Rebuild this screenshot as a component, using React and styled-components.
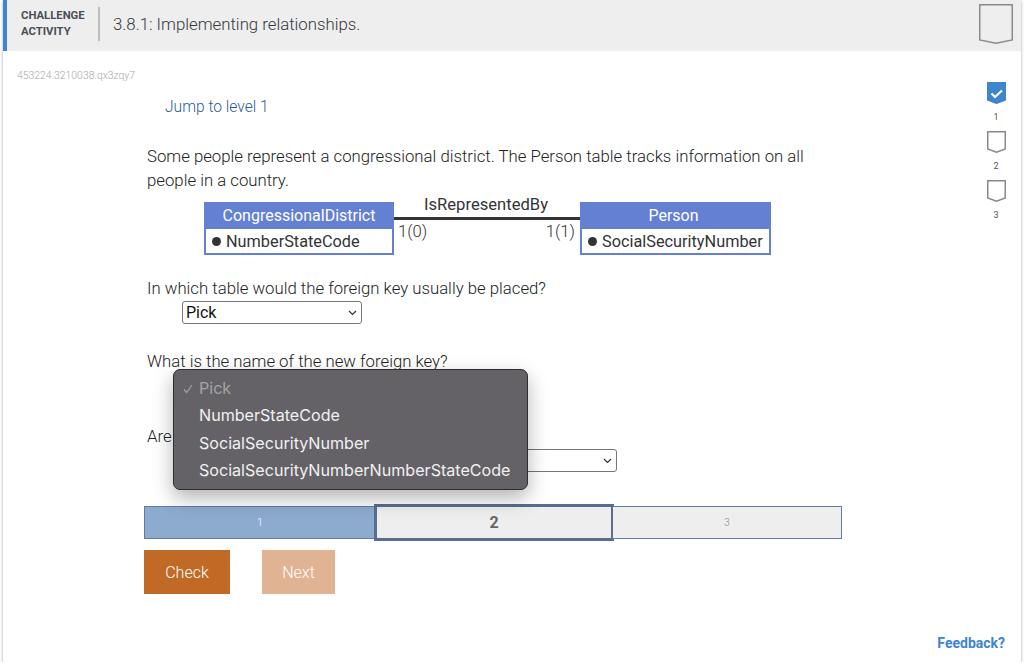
import React from 'react';
import styled, {createGlobalStyle} from 'styled-components';

const GlobalStyle = createGlobalStyle`
  html, body {
    margin: 0;
    background: #fff;
    font-family: Roboto, "Liberation Sans", sans-serif;
  }
  * { box-sizing: border-box; }
`;

const CHEVRON = "data:image/svg+xml,%3Csvg xmlns='http://www.w3.org/2000/svg' width='9' height='6'%3E%3Cpath d='M1 1l3.5 3.5L8 1' fill='none' stroke='%23333' stroke-width='1.2'/%3E%3C/svg%3E";

const Card = styled.div`
  display: flex;
  flex-direction: column;
  width: 1018px;
  height: 662px;
  margin-left: 3px;
  background: #fff;
  box-shadow: 0 1px 3px rgba(0, 0, 0, 0.35);
`;

const Header = styled.header`
  display: flex;
  align-items: center;
  height: 51px;
  flex-shrink: 0;
  padding: 0 8px 3px 14px;
  background: #eeeeee;
  border-left: 4px solid #3d85cc;
`;

const Caption = styled.div`
  width: 77px;
  font-size: 11.3px;
  font-weight: 700;
  line-height: 16px;
  color: #4a4f55;
`;

const Divider = styled.div`
  width: 2px;
  height: 34px;
  margin-right: 13px;
  background: #bdbdbd;
`;

const Title = styled.h1`
  flex: 1;
  margin: 0;
  font-size: 16.8px;
  font-weight: 300;
  color: #33383d;
`;

const Body = styled.div`
  display: flex;
  flex: 1;
  min-height: 0;
`;

const Content = styled.main`
  flex: 1;
  padding: 19px 0 0 14px;
`;

const ActivityId = styled.div`
  font-size: 10.4px;
  font-weight: 300;
  line-height: 12px;
  color: #a8a8a8;
`;

const Exercise = styled.div`
  position: relative;
  width: 698px;
  margin: 13px 0 0 127px;
`;

const JumpLink = styled.a`
  display: block;
  margin-left: 21px;
  font-size: 15.6px;
  font-weight: 300;
  line-height: 24px;
  color: #2e5c9a;
`;

const Prompt = styled.p`
  width: 680px;
  margin: ${(props) => props.$top || 0}px 0 0 3px;
  font-size: 16.75px;
  font-weight: 300;
  line-height: 24px;
  color: #222;
`;

const Diagram = styled.div`
  display: flex;
  align-items: flex-start;
  margin: 4px 0 0 60px;
  font-size: 16.3px;
  color: #333;
`;

const EntityTable = styled.div`
  width: ${(props) => props.$width}px;
  margin-top: 6px;
  border: 2px solid #6480d2;
`;

const EntityName = styled.div`
  height: 25px;
  padding-right: ${(props) => props.$inset || 0}px;
  font-size: 16px;
  line-height: 24px;
  text-align: center;
  color: #fff;
  background: #6480d2;
`;

const EntityKey = styled.div`
  display: flex;
  align-items: center;
  gap: 5px;
  height: 24px;
  padding-left: 6px;
  white-space: nowrap;
`;

const KeyDot = styled.span`
  width: 9px;
  height: 9px;
  border-radius: 50%;
  background: #333;
`;

const Relation = styled.div`
  width: 186px;
`;

const RelationName = styled.div`
  height: 18px;
  padding-right: 2px;
  font-size: 16.6px;
  line-height: 18px;
  text-align: center;
`;

const RelationLine = styled.div`
  height: 3px;
  margin-top: 3px;
  background: #333;
`;

const Cardinality = styled.div`
  display: flex;
  justify-content: space-between;
  padding: 3px 5px 0 4px;
  font-size: 16.7px;
  font-weight: 300;
  line-height: 18px;
`;

const Select = styled.select`
  display: block;
  width: ${(props) => props.$width}px;
  height: 23px;
  margin: ${(props) => props.$top}px 0 0 38px;
  padding: 0 0 0 3px;
  appearance: none;
  font-family: Roboto, "Liberation Sans", sans-serif;
  font-size: 16px;
  color: #111;
  background: #fff url("${CHEVRON}") no-repeat right 4px center;
  border: 1px solid #767676;
  border-radius: 3px;
`;

const PickerMenu = styled.ul`
  position: absolute;
  top: 274px;
  left: 29px;
  width: 355px;
  height: 121px;
  margin: 0;
  padding: 5px 0 0;
  list-style: none;
  font-family: Inter, "Liberation Sans", sans-serif;
  font-size: 16.1px;
  color: #f1f0f2;
  background: #646266;
  border: 1px solid #2e2e30;
  border-radius: 7px;
  box-shadow: 0 8px 20px rgba(0, 0, 0, 0.3);
`;

const PickerItem = styled.li`
  position: relative;
  height: 27.4px;
  padding-left: 25px;
  line-height: 27px;
  white-space: nowrap;
  color: ${(props) => (props.$muted ? '#a5a3a7' : '#f1f0f2')};
`;

const PickerCheck = styled.svg`
  position: absolute;
  top: 9px;
  left: 9px;
  width: 10px;
  height: 10px;
`;

const Levels = styled.div`
  display: flex;
  height: 33px;
  margin-top: 34px;
  border: 1px solid #5f7ba6;
`;

const Level = styled.div`
  display: flex;
  flex: ${(props) => props.$grow};
  align-items: center;
  justify-content: center;
  font-size: 10px;
  font-weight: 300;
  color: ${(props) => (props.$done ? '#fff' : '#8a8a8a')};
  background: ${(props) => (props.$done ? '#8dabcf' : '#eeeeee')};
`;

const ActiveLevel = styled(Level)`
  margin: -3px -1px;
  font-size: 16px;
  font-weight: 700;
  color: #666;
  border: 3px solid #5a6d90;
`;

const Actions = styled.div`
  display: flex;
  gap: 32px;
  margin-top: 11px;
`;

const ActionButton = styled.button`
  width: ${(props) => props.$width}px;
  height: 44px;
  padding: 0;
  font-family: Roboto, "Liberation Sans", sans-serif;
  font-size: 16px;
  font-weight: 300;
  color: #fff;
  background: ${(props) => props.$color};
  border: 0;
`;

const Sidebar = styled.aside`
  display: flex;
  flex-direction: column;
  align-items: center;
  gap: 8px;
  width: 50px;
  padding-top: 31px;
`;

const LevelMark = styled.div`
  display: flex;
  flex-direction: column;
  align-items: center;
  gap: 7px;
  font-size: 9px;
  line-height: 12px;
  color: #555;
`;

const Footer = styled.footer`
  display: flex;
  justify-content: flex-end;
  padding: 0 16px 11px 0;
`;

const FeedbackLink = styled.a`
  font-size: 14px;
  font-weight: 700;
  line-height: 16px;
  color: #3d85cc;
`;

function Bookmark({size, height, filled}) {
    return (
        <svg width={size} height={height} viewBox={`0 0 ${size} ${height}`}>
            <path
                d={`M.75.75H${size - 0.75}V${height - 4}L${size / 2} ${height - 0.75}L.75 ${height - 4}Z`}
                fill={filled ? '#3d85cc' : 'none'}
                stroke={filled ? '#3d85cc' : '#8a8a8a'}
                strokeWidth="1.5"
            />
            {filled && (
                <path d="M4.5 11.5L8 15L15 8.5" fill="none" stroke="#fff" strokeWidth="2.2" />
            )}
        </svg>
    );
}

const MENU_OPTIONS = ['NumberStateCode', 'SocialSecurityNumber', 'SocialSecurityNumberNumberStateCode'];

export default function App() {
    return (
        <Card>
            <GlobalStyle />
            <Header>
                <Caption>CHALLENGE ACTIVITY</Caption>
                <Divider />
                <Title>3.8.1: Implementing relationships.</Title>
                <Bookmark size={34} height={40} />
            </Header>
            <Body>
                <Content>
                    <ActivityId>453224.3210038.qx3zqy7</ActivityId>
                    <Exercise>
                        <JumpLink>Jump to level 1</JumpLink>
                        <Prompt $top={25}>
                            Some people represent a congressional district. The Person table tracks information on all people in a country.
                        </Prompt>
                        <Diagram>
                            <EntityTable $width={190}>
                                <EntityName>CongressionalDistrict</EntityName>
                                <EntityKey><KeyDot />NumberStateCode</EntityKey>
                            </EntityTable>
                            <Relation>
                                <RelationName>IsRepresentedBy</RelationName>
                                <RelationLine />
                                <Cardinality><span>1(0)</span><span>1(1)</span></Cardinality>
                            </Relation>
                            <EntityTable $width={191}>
                                <EntityName $inset={4}>Person</EntityName>
                                <EntityKey><KeyDot />SocialSecurityNumber</EntityKey>
                            </EntityTable>
                        </Diagram>
                        <Prompt $top={21}>In which table would the foreign key usually be placed?</Prompt>
                        <Select $width={180} $top={1}><option>Pick</option></Select>
                        <Prompt $top={25}>What is the name of the new foreign key?</Prompt>
                        <Select $width={180} $top={0}><option>Pick</option></Select>
                        <Prompt $top={28}>Are</Prompt>
                        <Select $width={435} $top={1}><option>Pick</option></Select>
                        <PickerMenu>
                            <PickerItem $muted>
                                <PickerCheck viewBox="0 0 10 10">
                                    <path d="M1 5.5L3.6 8.5L9 1" fill="none" stroke="#a5a3a7" strokeWidth="1.2" />
                                </PickerCheck>
                                Pick
                            </PickerItem>
                            {MENU_OPTIONS.map((option) => (
                                <PickerItem key={option}>{option}</PickerItem>
                            ))}
                        </PickerMenu>
                        <Levels>
                            <Level $done $grow={232}>1</Level>
                            <ActiveLevel $grow={236}>2</ActiveLevel>
                            <Level $grow={230}>3</Level>
                        </Levels>
                        <Actions>
                            <ActionButton $width={86} $color="#c06a26">Check</ActionButton>
                            <ActionButton $width={73} $color="#e0b392">Next</ActionButton>
                        </Actions>
                    </Exercise>
                </Content>
                <Sidebar>
                    <LevelMark><Bookmark size={19} height={22} filled />1</LevelMark>
                    <LevelMark><Bookmark size={19} height={22} />2</LevelMark>
                    <LevelMark><Bookmark size={19} height={22} />3</LevelMark>
                </Sidebar>
            </Body>
            <Footer>
                <FeedbackLink>Feedback?</FeedbackLink>
            </Footer>
        </Card>
    );
}
